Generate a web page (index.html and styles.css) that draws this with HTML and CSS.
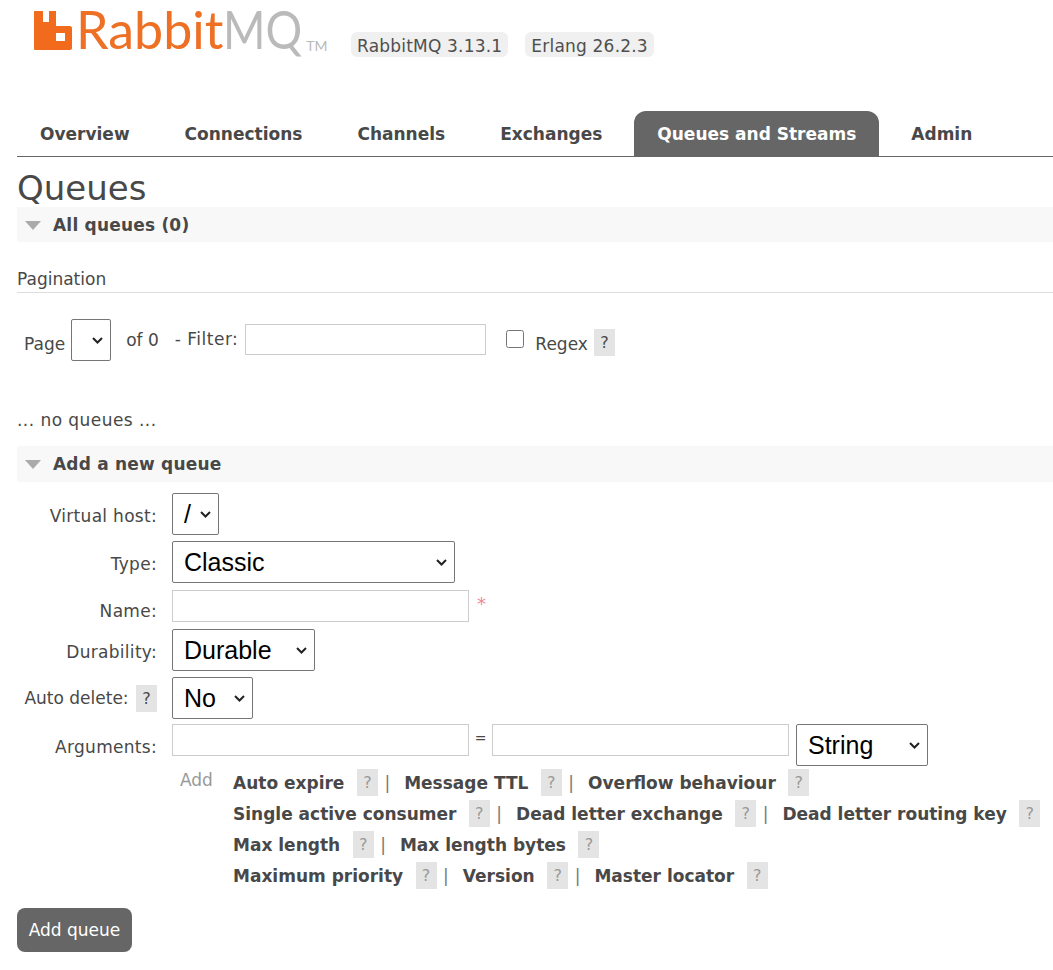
FILE: index.html
```html
<!DOCTYPE html>
<html lang="en">
<head>
    <meta charset="UTF-8">
    <meta name="viewport" content="width=device-width, initial-scale=1.0">
    <title>RabbitMQ Management</title>
    <link rel="stylesheet" href="styles.css">
</head>
<body>
    <div id="header">
        <div class="logo">
            <svg width="39" height="40" viewBox="0 0 39 40"><path fill="#f26a1b" fill-rule="evenodd" d="M1 2c0-1 0-1 1-1h8v11h6V1h7v15h14c1 0 2 1 2 2v20c0 1-1 2-2 2H2c-1 0-1-1-1-1zM23 23v8h9v-8z"/></svg>
            <span class="logo-rabbit">Rabbit</span><span class="logo-mq">MQ</span><span class="logo-tm">TM</span>
        </div>
        <span class="version">RabbitMQ 3.13.1</span>
        <span class="version">Erlang 26.2.3</span>
    </div>

    <ul id="tabs">
        <li><a href="#">Overview</a></li>
        <li><a href="#">Connections</a></li>
        <li><a href="#">Channels</a></li>
        <li><a href="#">Exchanges</a></li>
        <li><a href="#" class="selected">Queues and Streams</a></li>
        <li><a href="#">Admin</a></li>
    </ul>

    <div id="main">
        <h1>Queues</h1>
        <h2 class="section-title"><span class="arrow"></span>All queues (0)</h2>

        <h3 class="pagination-title">Pagination</h3>
        <div class="pagination">
            <label class="page-label">Page</label>
            <select class="big-select page-select"></select>
            <span class="of-label">of 0</span>
            <span class="filter-label">- Filter:</span>
            <input type="text" class="filter-input">
            <input type="checkbox" class="regex-check">
            <label class="regex-label">Regex</label>
            <span class="help">?</span>
        </div>

        <p class="no-queues">... no queues ...</p>

        <h2 class="section-title new-queue"><span class="arrow"></span>Add a new queue</h2>

        <form method="post">
            <div class="form-row row-vhost">
                <label>Virtual host:</label>
                <select class="big-select vhost-select"><option>/</option></select>
            </div>
            <div class="form-row row-type">
                <label>Type:</label>
                <select class="big-select type-select"><option>Classic</option></select>
            </div>
            <div class="form-row row-name">
                <label>Name:</label>
                <input type="text" class="text-input">
                <span class="required">*</span>
            </div>
            <div class="form-row row-durability">
                <label>Durability:</label>
                <select class="big-select durable-select"><option>Durable</option></select>
            </div>
            <div class="form-row row-delete">
                <label>Auto delete: <span class="help">?</span></label>
                <select class="big-select delete-select"><option>No</option></select>
            </div>
            <div class="form-row row-args">
                <label>Arguments:</label>
                <input type="text" class="text-input">
                <span class="equals">=</span>
                <input type="text" class="text-input">
                <select class="big-select string-select"><option>String</option></select>
            </div>
            <div class="arg-helpers">
                <span class="add-label">Add</span>
                <div class="arg-links">
                    <div class="arg-line">
                        <a href="#">Auto expire</a><span class="help">?</span><span class="sep">|</span>
                        <a href="#">Message TTL</a><span class="help">?</span><span class="sep">|</span>
                        <a href="#">Overflow behaviour</a><span class="help">?</span>
                    </div>
                    <div class="arg-line">
                        <a href="#">Single active consumer</a><span class="help">?</span><span class="sep">|</span>
                        <a href="#">Dead letter exchange</a><span class="help">?</span><span class="sep">|</span>
                        <a href="#">Dead letter routing key</a><span class="help">?</span>
                    </div>
                    <div class="arg-line">
                        <a href="#">Max length</a><span class="help">?</span><span class="sep">|</span>
                        <a href="#">Max length bytes</a><span class="help">?</span>
                    </div>
                    <div class="arg-line">
                        <a href="#">Maximum priority</a><span class="help">?</span><span class="sep">|</span>
                        <a href="#">Version</a><span class="help">?</span><span class="sep">|</span>
                        <a href="#">Master locator</a><span class="help">?</span>
                    </div>
                </div>
            </div>
            <button type="submit" class="add-button">Add queue</button>
        </form>
    </div>
</body>
</html>
```

FILE: styles.css
```css
* {
    box-sizing: border-box;
}

body {
    margin: 0;
    font-family: "DejaVu Sans", Verdana, sans-serif;
    font-size: 17px;
    color: #484848;
    background: #fff;
}

a {
    color: #484848;
    text-decoration: none;
}

/* Header */
#header {
    height: 111px;
    padding: 10px 0 0 33px;
    display: flex;
    align-items: flex-start;
}

.logo {
    display: flex;
    align-items: flex-start;
    width: 318px;
    height: 42px;
    font-family: Lato, sans-serif;
    font-weight: 400;
    font-size: 52px;
    line-height: 38px;
}

.logo svg {
    margin-right: 4px;
    flex: none;
}

.logo-rabbit {
    color: #ee7024;
}

.logo-mq {
    color: #bababa;
    transform: scaleX(0.88);
    transform-origin: left;
    margin-right: -11px;
}

.logo-tm {
    color: #b9b9b9;
    font-size: 14px;
    margin: 29px 0 0 4px;
    line-height: 14px;
}

.version {
    background: #f0f0f0;
    border-radius: 6px;
    color: #4f4f4f;
    height: 25px;
    padding: 0 6px;
    margin: 22px 17px 0 0;
    font-size: 17px;
    letter-spacing: 0.2px;
    line-height: 28px;
    white-space: nowrap;
}

/* Tabs */
#tabs {
    list-style: none;
    margin: 0 0 0 17px;
    padding: 0;
    display: flex;
    gap: 9px;
    height: 46px;
    border-bottom: 1px solid #666;
}

#tabs a {
    display: block;
    height: 45px;
    padding: 0 23px;
    font-size: 17px;
    font-weight: bold;
    line-height: 47px;
    border-radius: 12px 12px 0 0;
}

#tabs a.selected {
    background: #666;
    color: #fff;
}

/* Main */
#main {
    padding-left: 17px;
}

h1 {
    margin: 0;
    padding-top: 6px;
    font-size: 34px;
    font-weight: normal;
    line-height: 50px;
    height: 50px;
    color: #484848;
}

.section-title {
    margin: 0;
    height: 35px;
    background: #f8f8f8;
    padding-left: 36px;
    font-size: 17px;
    font-weight: bold;
    letter-spacing: 0.2px;
    line-height: 37px;
    position: relative;
}

.arrow {
    position: absolute;
    left: 8px;
    top: 14px;
    border-top: 9px solid #aaa;
    border-left: 8px solid transparent;
    border-right: 8px solid transparent;
}

.pagination-title {
    margin: 27px 0 0;
    height: 24px;
    border-bottom: 1px solid #ddd;
    font-size: 17px;
    font-weight: normal;
    line-height: 20px;
}

.pagination {
    display: flex;
    align-items: flex-start;
    height: 68px;
    margin-top: 26px;
    padding-left: 7px;
    color: #484848;
}

.page-label {
    margin-top: 15px;
}

.page-select {
    width: 40px;
    margin-left: 6px;
}

.of-label {
    margin: 11px 0 0 15px;
}

.filter-label {
    margin: 10px 0 0 16px;
    letter-spacing: 0.5px;
}

.filter-input {
    width: 241px;
    height: 31px;
    margin: 5px 0 0 7px;
    border: 1px solid #ccc;
}

.regex-check {
    width: 18px;
    height: 18px;
    margin: 11px 0 0 20px;
}

.regex-label {
    margin: 15px 0 0 11px;
}

.help {
    display: inline-block;
    width: 21px;
    height: 27px;
    background: #e4e4e4;
    color: #484848;
    font-size: 16px;
    font-weight: normal;
    letter-spacing: 0;
    line-height: 27px;
    text-align: center;
}

.pagination .help {
    margin: 10px 0 0 6px;
}

.no-queues {
    margin: 0;
    height: 59px;
    padding-top: 23px;
    line-height: 20px;
    letter-spacing: 0.45px;
}

.new-queue {
    margin-top: 0;
    height: 36px;
}

/* Form */
form {
    padding-top: 11px;
}

.form-row {
    display: flex;
    align-items: flex-start;
}

.form-row > label {
    width: 140px;
    margin-right: 15px;
    text-align: right;
    flex: none;
    line-height: 20px;
    letter-spacing: 0.3px;
}

.row-vhost { height: 48px; }
.row-vhost > label { padding-top: 13px; }
.row-type { height: 49px; }
.row-type > label { padding-top: 13px; }
.row-name { height: 39px; }
.row-name > label { padding-top: 11px; }
.row-durability { height: 48px; }
.row-durability > label { padding-top: 13px; }
.row-delete { height: 47px; }
.row-delete > label { padding-top: 8px; letter-spacing: 0; }
.row-args { height: 44px; }
.row-args > label { padding-top: 13px; }

.row-delete .help {
    margin-left: 2px;
}

/* native arrow sits too far right, so it is drawn here */
.big-select {
    appearance: none;
    height: 42px;
    font-family: "Liberation Sans", Arial, sans-serif;
    font-size: 25px;
    padding-left: 11px;
    color: #000;
    border: 1px solid #767676;
    border-radius: 2px;
    background: #fff url("data:image/svg+xml,%3Csvg xmlns='http://www.w3.org/2000/svg' width='11' height='7'%3E%3Cpath d='M1 1l4.5 4.5L10 1' fill='none' stroke='%23222' stroke-width='2'/%3E%3C/svg%3E") no-repeat right 7px center;
}

.vhost-select { width: 47px; }
.type-select { width: 283px; }
.durable-select { width: 143px; }
.delete-select { width: 81px; }
.string-select { width: 132px; margin-left: 7px; }

.text-input {
    width: 297px;
    height: 32px;
    border: 1px solid #ccc;
}

.required {
    margin: 3px 0 0 8px;
    color: #e89;
    font-size: 18px;
}

.equals {
    width: 23px;
    text-align: center;
    font-size: 14px;
    line-height: 28px;
}

.arg-helpers {
    display: flex;
    align-items: flex-start;
    margin-top: -1px;
    padding-left: 163px;
}

.add-label {
    color: #999;
    width: 53px;
    flex: none;
    line-height: 26px;
}

.arg-line {
    display: flex;
    align-items: center;
    height: 31px;
    white-space: nowrap;
}

.arg-line a {
    font-weight: bold;
}

.arg-line .help {
    margin-left: 12.5px;
    color: #999;
}

.sep {
    margin: 0 14px 0 6.5px;
    color: #777;
}

.add-button {
    display: block;
    margin-top: 17px;
    width: 115px;
    height: 44px;
    background: #666;
    color: #fff;
    border: none;
    border-radius: 8px;
    font-family: "DejaVu Sans", Verdana, sans-serif;
    font-size: 17px;
}
```
